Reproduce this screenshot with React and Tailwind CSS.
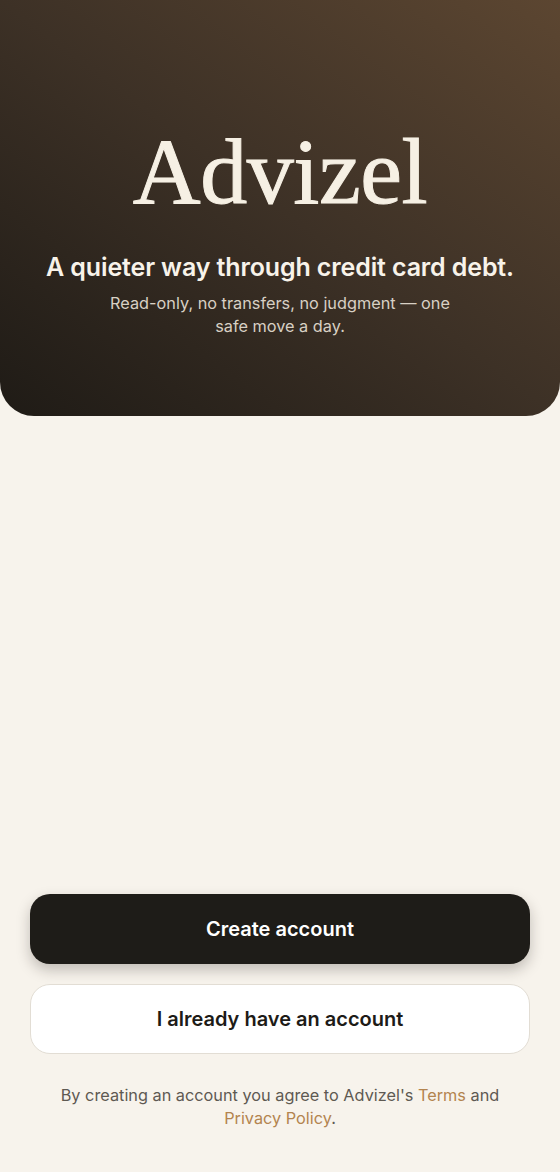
export default function App() {
  return (
    <div
      className="min-h-screen flex flex-col bg-[#f7f3ec]"
      style={{ fontFamily: 'Inter, "Noto Sans", sans-serif' }}
    >
      {/* Hero */}
      <div className="h-[416px] shrink-0 rounded-b-[34px] bg-gradient-to-tr from-[#1f1b16] via-[#3d3126] to-[#5c4631] flex flex-col items-center pt-[124px] px-6 text-center">
        <h1
          className="text-[94px] leading-none tracking-[-0.005em] text-[#f6f0e4] [-webkit-text-stroke:1px_#f6f0e4]"
          style={{ fontFamily: '"Liberation Serif", "DejaVu Serif", serif' }}
        >
          Advizel
        </h1>
        <p className="mt-[33px] text-[25px] font-semibold leading-8 tracking-[-0.005em] text-[#f8f3ea]">
          A quieter way through credit card debt.
        </p>
        <p className="mt-[9px] max-w-[350px] text-[16.3px] leading-[23px] text-[#d8d0c4]">
          Read-only, no transfers, no judgment — one safe move a day.
        </p>
      </div>

      <div className="flex-1" />

      {/* Actions */}
      <div className="px-[30px] pb-[42px] flex flex-col">
        <button className="h-[70px] rounded-[20px] bg-[#1e1c18] text-white text-[20px] font-semibold shadow-[0_6px_14px_rgba(30,25,18,0.25)]">
          Create account
        </button>
        <button className="mt-[20px] h-[70px] rounded-[20px] bg-white border border-[#e2ddd4] text-[#1d1b17] text-[20px] font-semibold">
          I already have an account
        </button>
        <p className="mt-[30px] px-6 text-center text-[16.3px] leading-[23px] text-[#5e5952]">
          By creating an account you agree to Advizel's{' '}
          <span className="text-[#b3844f]">Terms</span> and{' '}
          <span className="text-[#b3844f]">Privacy Policy</span>.
        </p>
      </div>
    </div>
  )
}
